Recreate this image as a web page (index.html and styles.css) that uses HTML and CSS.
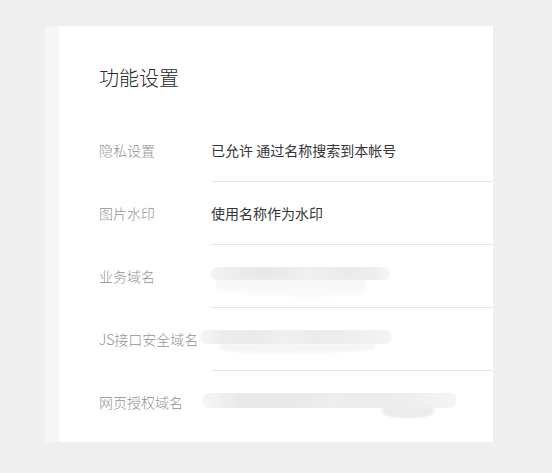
FILE: index.html
```html
<!DOCTYPE html>
<html lang="zh-CN">
<head>
<meta charset="utf-8">
<title>功能设置</title>
<link rel="stylesheet" href="styles.css">
</head>
<body>
<div class="page">
  <div class="panel">
    <div class="strip"></div>
    <div class="content">
      <h2 class="title">功能设置</h2>
      <div class="rows">
        <div class="row">
          <div class="label">隐私设置</div>
          <div class="value">已允许 通过名称搜索到本帐号</div>
        </div>
        <div class="row">
          <div class="label">图片水印</div>
          <div class="value">使用名称作为水印</div>
        </div>
        <div class="row">
          <div class="label">业务域名</div>
          <div class="value"><span class="blur blur-a"></span></div>
        </div>
        <div class="row">
          <div class="label">JS接口安全域名</div>
          <div class="value"><span class="blur blur-b"></span></div>
        </div>
        <div class="row last">
          <div class="label">网页授权域名</div>
          <div class="value"><span class="blur blur-c"></span></div>
        </div>
      </div>
    </div>
  </div>
</div>
</body>
</html>
```

FILE: styles.css
```css
html, body {
  margin: 0;
  padding: 0;
  background: #efefef;
}
body {
  font-family: "Noto Sans CJK SC", "Noto Sans", "Liberation Sans", sans-serif;
  width: 552px;
  height: 473px;
  overflow: hidden;
}
.page {
  padding: 26px 0 0 45px;
}
.panel {
  display: flex;
  width: 448px;
  height: 416px;
  background: #ffffff;
}
.strip {
  width: 14px;
  flex: none;
  background: #f5f6f8;
}
.content {
  flex: 1;
  padding: 38px 0 9px 40px;
}
.title {
  margin: 0;
  font-size: 20px;
  font-weight: 300;
  line-height: 28px;
  color: #2a2a2a;
}
.rows {
  margin-top: 27px;
}
.row {
  display: flex;
  height: 63px;
}
.label {
  width: 112px;
  flex: none;
  height: 62px;
  display: flex;
  align-items: center;
  font-size: 14px;
  font-weight: 300;
  color: #939393;
  white-space: nowrap;
}
.value {
  flex: 1;
  height: 62px;
  display: flex;
  align-items: center;
  border-bottom: 1px solid #e7e7e7;
  font-size: 14px;
  font-weight: 400;
  color: #353535;
  white-space: nowrap;
}
.row.last .value {
  border-bottom: none;
}
.blur {
  display: block;
  position: relative;
  border-radius: 8px;
  filter: blur(0.6px);
}
.blur::after {
  content: "";
  position: absolute;
  filter: blur(1px);
}
.blur-a {
  width: 180px;
  height: 13px;
  margin: -5px 0 0 -1px;
  background: linear-gradient(90deg, #f4f4f4 0, #ece9e9 20%, #e8e9eb 35%, #f0f0f0 55%, #ebebeb 75%, #eeeeee 92%, #f6f6f6 100%);
}
.blur-a::after {
  left: 6px;
  top: 13px;
  width: 150px;
  height: 17px;
  background: linear-gradient(180deg, #f7f7f7, #fbfbfb);
  border-radius: 0 0 40% 70%;
}
.blur-b {
  width: 192px;
  height: 14px;
  margin: -4px 0 0 -11px;
  background: linear-gradient(90deg, #f6f6f6 0, #ececec 12%, #e9eaec 30%, #f0f0f0 45%, #ebebeb 60%, #eeeeee 80%, #f4f4f4 100%);
}
.blur-b::after {
  left: 20px;
  top: 14px;
  width: 155px;
  height: 9px;
  background: #f5f5f5;
  border-radius: 0 0 60% 40%;
}
.blur-c {
  width: 255px;
  height: 15px;
  margin: -3px 0 0 -9px;
  background: linear-gradient(90deg, #f5f5f5 0, #eaeaeb 15%, #e8e9eb 35%, #eeeeee 50%, #ececec 65%, #eeeeee 80%, #f5f5f5 100%);
}
.blur-c::after {
  left: 180px;
  top: 14px;
  width: 52px;
  height: 11px;
  background: #ececec;
  border-radius: 0 0 50% 50%;
}
```
